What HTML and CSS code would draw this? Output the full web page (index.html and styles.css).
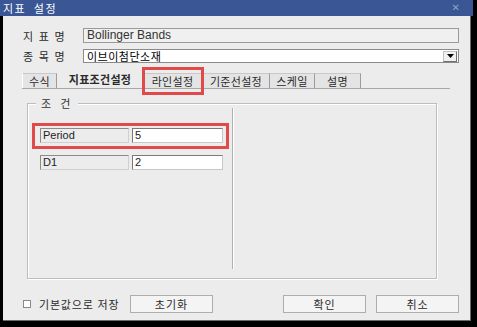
FILE: index.html
```html
<!DOCTYPE html>
<html lang="ko">
<head>
<meta charset="utf-8">
<link rel="stylesheet" href="styles.css">
</head>
<body>
<div class="window">
  <div class="titlebar">
    <span class="title">지표 설정</span>
    <span class="close">✕</span>
  </div>
  <div class="client">
    <div class="field-row row1">
      <span class="label">지 표 명</span>
      <div class="textbox disabled">Bollinger Bands</div>
    </div>
    <div class="field-row row2">
      <span class="label">종 목 명</span>
      <div class="combo">
        <span class="combo-text">이브이첨단소재</span>
        <span class="drop"><svg width="7" height="4" viewBox="0 0 7 4"><path d="M0 0h7L3.5 4z" fill="#000"/></svg></span>
      </div>
    </div>
    <div class="tabs">
      <span class="tab t1">수식</span>
      <span class="tab t2 active">지표조건설정</span>
      <span class="tab t3">라인설정</span>
      <span class="tab t4">기준선설정</span>
      <span class="tab t5">스케일</span>
      <span class="tab t6">설명</span>
      <span class="highlight hl-tab"></span>
    </div>
    <div class="group">
      <span class="group-label">조 건</span>
      <div class="params">
        <div class="param">
          <div class="pname">Period</div>
          <div class="pvalue">5</div>
        </div>
        <div class="param">
          <div class="pname">D1</div>
          <div class="pvalue">2</div>
        </div>
        <span class="highlight hl-row"></span>
      </div>
      <div class="detail"></div>
    </div>
    <div class="footer">
      <span class="check"></span>
      <span class="check-label">기본값으로 저장</span>
      <span class="btn reset">초기화</span>
      <span class="spacer"></span>
      <span class="btn ok">확인</span>
      <span class="btn cancel">취소</span>
    </div>
  </div>
</div>
</body>
</html>
```

FILE: styles.css
```css
* { box-sizing: border-box; }
html, body {
  margin: 0;
  padding: 0;
  background: #000;
  width: 477px;
  height: 327px;
  overflow: hidden;
}
body {
  font-family: "Noto Sans CJK KR", "Liberation Sans", sans-serif;
  font-size: 11px;
  color: #000;
}
.window {
  width: 473px;
  height: 321px;
  display: flex;
  flex-direction: column;
}
.titlebar {
  height: 16px;
  background: #3a5694;
  display: flex;
  align-items: center;
  justify-content: space-between;
  padding: 0 13px 0 3px;
  color: #fff;
}
.title {
  font-size: 11px;
  line-height: 16px;
  letter-spacing: 1.5px;
  word-spacing: 3px;
}
.close {
  color: #8ea2cc;
  font-size: 10px;
  line-height: 16px;
  font-family: "DejaVu Sans", sans-serif;
}
.client {
  margin-left: 3px;
  width: 468px;
  height: 305px;
  background: #ececec;
  border-right: 1px solid #6a6a6a;
  border-bottom: 1px solid #6a6a6a;
  display: flex;
  flex-direction: column;
  padding-left: 19px;
}
.field-row {
  display: flex;
  align-items: center;
}
.row1 { margin-top: 12px; height: 15px; }
.row2 { margin-top: 6px; height: 14px; }
.label {
  width: 61px;
  padding-left: 1px;
  font-size: 11px;
  color: #2a2a2a;
  letter-spacing: 1.3px;
}
.textbox {
  width: 376px;
  height: 15px;
  border: 1px solid #9a9a9a;
  background: #f0f0f0;
  font-family: "Liberation Sans", sans-serif;
  font-size: 12px;
  line-height: 12px;
  padding-left: 3px;
  color: #333;
}
.combo {
  width: 376px;
  height: 14px;
  border: 1px solid #8a8a8a;
  background: #fff;
  display: flex;
  align-items: center;
  justify-content: space-between;
  padding: 0 1px 0 3px;
}
.combo-text { font-size: 11px; line-height: 12px; letter-spacing: 0.5px; }
.drop {
  width: 14px;
  height: 11px;
  background: #f0f0f0;
  border: 1px solid #c0c0c0;
  border-right-color: #707070;
  border-bottom-color: #707070;
  display: flex;
  align-items: center;
  justify-content: center;
}
.tabs {
  margin-top: 7px;
  width: 428px;
  height: 19px;
  display: flex;
  align-items: flex-end;
  border-bottom: 1px solid #a8a8a8;
  position: relative;
}
.tab {
  height: 15px;
  display: flex;
  align-items: center;
  justify-content: center;
  font-size: 11px;
  color: #2a2a2a;
  background: #e4e4e4;
  border-top: 1px solid #c8c8c8;
  border-right: 1px solid #9c9c9c;
  letter-spacing: 0.3px;
}
.t1 { width: 35px; border-left: 1px solid #fff; }
.t2 { width: 86px; }
.t3 { width: 60px; }
.t4 { width: 67px; }
.t5 { width: 45px; }
.t6 { width: 46px; }
.tab.active {
  height: 18px;
  font-weight: bold;
  background: #ececec;
  border-top: none;
  border-right: none;
}
.highlight {
  position: absolute;
  border: 3px solid #e04a4a;
  pointer-events: none;
}
.hl-tab {
  left: 120px;
  top: -3px;
  width: 62px;
  height: 28px;
}
.group {
  margin-top: 14px;
  margin-left: 5px;
  width: 410px;
  height: 176px;
  border: 1px solid #bdbdbd;
  box-shadow: inset 1px 1px 0 #fff, 1px 1px 0 #fff;
  position: relative;
  display: flex;
}
.group-label {
  position: absolute;
  left: 8px;
  top: -7px;
  padding: 0 5px;
  background: #ececec;
  font-size: 11px;
  line-height: 12px;
  color: #333;
  letter-spacing: 3px;
}
.params {
  width: 204px;
  padding: 24px 0 0 12px;
  display: flex;
  flex-direction: column;
  gap: 12px;
  position: relative;
}
.param {
  display: flex;
  gap: 3px;
  height: 15px;
}
.pname {
  width: 89px;
  height: 15px;
  background: #ececec;
  border: 1px solid #8a8a8a;
  border-right-color: #d0d0d0;
  border-bottom-color: #d0d0d0;
  font-family: "Liberation Sans", sans-serif;
  font-size: 11px;
  line-height: 13px;
  padding-left: 2px;
  color: #222;
}
.pvalue {
  width: 91px;
  height: 15px;
  background: #fff;
  border: 1px solid #7a7a7a;
  border-right-color: #c8c8c8;
  border-bottom-color: #c8c8c8;
  font-family: "Liberation Sans", sans-serif;
  font-size: 11px;
  line-height: 13px;
  padding-left: 2px;
  color: #222;
}
.hl-row {
  left: 4px;
  top: 19px;
  width: 197px;
  height: 26px;
}
.detail {
  margin-top: 4px;
  height: 161px;
  width: 0;
  border-left: 1px solid #b0b0b0;
  box-shadow: 1px 0 0 #fff;
}
.footer {
  margin-top: 16px;
  width: 437px;
  height: 18px;
  display: flex;
  align-items: center;
}
.check {
  width: 8px;
  height: 8px;
  border: 1px solid #8a8a8a;
  background: #fff;
  margin-left: 1px;
}
.check-label {
  margin-left: 8px;
  width: 91px;
  font-size: 11px;
  color: #2a2a2a;
  letter-spacing: 0.8px;
}
.btn {
  width: 83px;
  height: 18px;
  border: 1px solid #adadad;
  background: #f4f4f4;
  display: flex;
  align-items: center;
  justify-content: center;
  font-size: 11px;
  color: #2a2a2a;
  letter-spacing: 1px;
}
.spacer { flex: 1; }
.cancel { margin-left: 10px; }
```
